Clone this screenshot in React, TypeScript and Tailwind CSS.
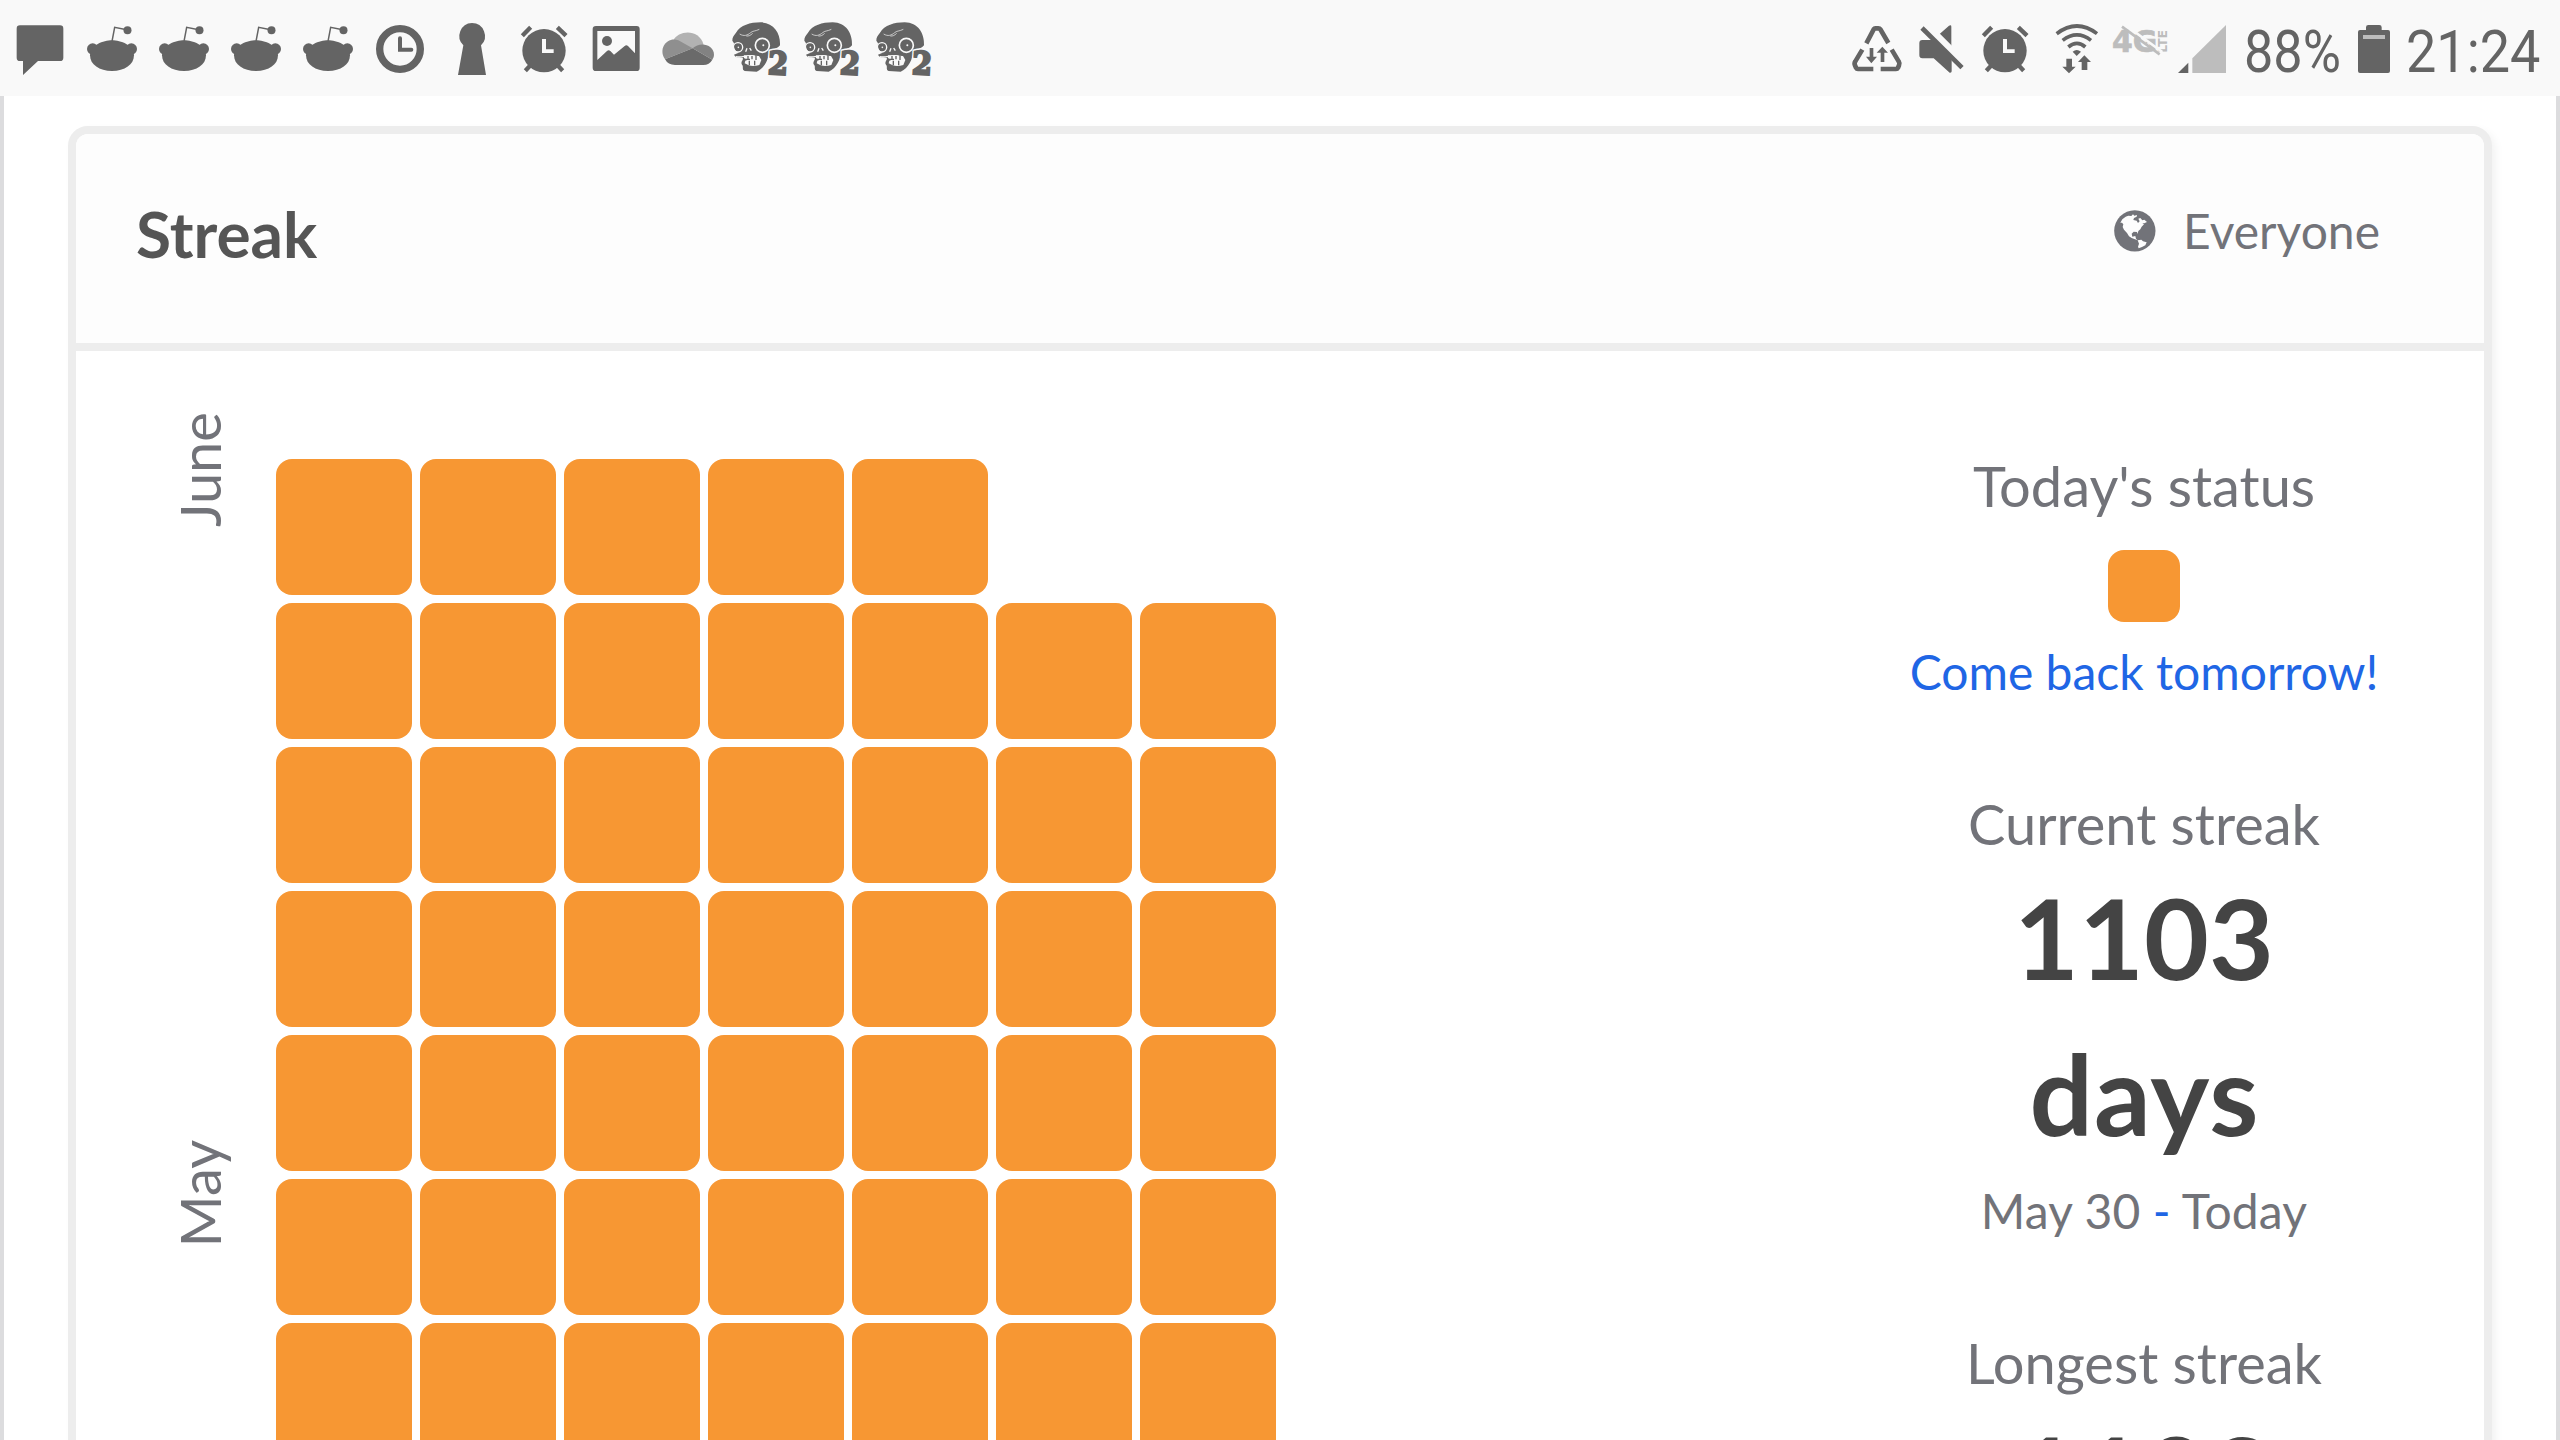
import type { ReactNode } from "react";

const INK = "#646464";
const BAR = "#f9f9f9";

/* Status-bar glyphs are drawn on a grid of three units per pixel. */
function Slot({ x, children }: { x: number; children: ReactNode }) {
  return (
    <svg className="h-24 w-[72px] shrink-0" viewBox={`${x} 0 216 288`} fill={INK}>
      {children}
    </svg>
  );
}

function Message() {
  return (
    <Slot x={12}>
      <path d="M60 76H180Q190 76 190 86V173Q190 183 180 183H114L69 225V183H60Q50 183 50 173V86Q50 76 60 76Z" />
    </Slot>
  );
}

function Reddit() {
  return (
    <Slot x={228}>
      <path d="M336 124L344 82L380 89" fill="none" stroke={INK} strokeWidth="4.5" />
      <circle cx="382.500" cy="91" r="12" />
      <circle cx="278" cy="147" r="17" />
      <circle cx="394" cy="147" r="17" />
      <path d="M336 121C362 121 402 136 402 166C402 194 374 213 336 213C298 213 270 194 270 166C270 136 310 121 336 121Z" />
    </Slot>
  );
}

function Clock() {
  return (
    <Slot x={1092}>
      <circle cx="1200" cy="147" r="61" fill="none" stroke={INK} strokeWidth="22" />
      <path
        d="M1200 115V149.500H1234"
        fill="none"
        stroke={INK}
        strokeWidth="12"
        strokeLinecap="round"
      />
    </Slot>
  );
}

function Keyhole() {
  return (
    <Slot x={-12}>
      <path d="M96 69A39 39 0 0 1 123 136L138 225H54L70 136A39 39 0 0 1 96 69Z" />
    </Slot>
  );
}

function AlarmShape() {
  return (
    <>
      <circle cx="312" cy="152" r="65" />
      <path d="M247 107L272 82M378 107L352 82" stroke={INK} strokeWidth="13" fill="none" />
      <path d="M256 212L280 187M368 212L344 187" stroke={INK} strokeWidth="13" fill="none" />
      <path d="M306 117H318V148H341V159H306Z" fill={BAR} />
    </>
  );
}

function Picture() {
  return (
    <Slot x={420}>
      <path
        fillRule="evenodd"
        d="M468 78H590Q599 78 599 87V203Q599 213 590 213H468Q458 213 458 203V87Q458 78 468 78ZM472 93V180L501 153Q506 149 511 153L522 164L554 138Q559 134 564 138L585 160V93Z"
      />
      <circle cx="501" cy="123" r="15" />
    </Slot>
  );
}

function Cloud() {
  return (
    <Slot x={636}>
      <path d="M700 121C715 92 775 84 791 134L758 146Z" fill="#b2b2b2" />
      <path d="M675 178C652 144 684 108 715 121L758 145Z" fill="#8f8f8f" />
      <path d="M758 145C779 124 822 132 822 165Q822 173 817 179Z" fill="#828282" />
      <path d="M758 145L817 179Q808 195 790 195H705Q684 195 675 178Z" fill="#6a6a6a" />
    </Slot>
  );
}

function Two({ stroke, width }: { stroke: string; width: number }) {
  return (
    <text
      x="984"
      y="223"
      textLength="60"
      lengthAdjust="spacingAndGlyphs"
      fontFamily="DejaVu Serif, serif"
      fontWeight="700"
      fontSize="94"
      stroke={stroke}
      strokeWidth={width}
      transform="rotate(3 1014 190)"
    >
      2
    </text>
  );
}

function Zombie() {
  return (
    <Slot x={852}>
      <path d="M877 122C877 112 880 108 888 98C902 76 930 67 962 67C1002 68 1022 100 1020 136C1012 146 994 150 988 160C984 176 976 204 950 215L914 213C904 208 912 200 906 194C900 186 912 178 908 174C900 170 888 176 882 164L896 158C884 154 880 140 882 130Z" />
      <g fill="none" stroke={BAR}>
        <circle cx="967" cy="136" r="21" strokeWidth="5" />
        <circle cx="894" cy="142" r="14" strokeWidth="4" />
        <path
          d="M899 102C912 110 922 106 932 98C938 92 946 94 958 88M919 108C926 109 932 106 938 100"
          strokeWidth="2"
        />
        <path d="M921 145L917 155M929 144L934 152" strokeWidth="4" />
        <path d="M888 170C908 174 918 164 944 168" strokeWidth="4" />
      </g>
      <path
        d="M912 166L957 168L964 180L958 195Q940 200 926 196L914 190L916 182L922 180L912 174Z"
        fill={BAR}
      />
      <path
        d="M924 168V176M936 168V178M948 168V180M916 178H930M928 182V196M944 182V196"
        stroke={INK}
        strokeWidth="4"
      />
      <circle cx="970" cy="136" r="3" fill={BAR} />
      <circle cx="895" cy="142" r="2.500" fill={BAR} />
      <Two stroke={BAR} width={16} />
      <Two stroke={INK} width={7} />
    </Slot>
  );
}

function Recycle() {
  return (
    <svg className="h-24 w-[60px]" viewBox="80 0 180 288" fill={INK}>
      <path
        d="M138 130L160 88Q162 85 165 85H174Q178 85 180 88L204 129M126 149L105 184Q101 190 104 196L107 203Q109 207 113 207H159M214 149L235 184Q239 190 236 196L233 203Q231 207 227 207H181"
        fill="none"
        stroke={INK}
        strokeWidth="14"
      />
      <path d="M148 144H159V170H170L153 190L137 170H148ZM181 186H192V158H203L186 140L169 158H181Z" />
    </svg>
  );
}

function Muted() {
  return (
    <svg className="h-24 w-[68px]" viewBox="260 0 204 288" fill={INK}>
      <path d="M306 120H346L394 166V214Q394 219 388 218L340 175H306Q297 175 297 166V129Q297 120 306 120ZM357 103L386 77Q393 73 393 80V138Z" />
      <path d="M318 69L446 197" stroke={BAR} strokeWidth="12" />
      <path d="M305 84L425 203" stroke={INK} strokeWidth="14" />
    </svg>
  );
}

function StatusAlarm() {
  return (
    <svg className="h-24 w-[72px]" viewBox="222 0 216 288" fill={INK}>
      <AlarmShape />
    </svg>
  );
}

function Wifi() {
  return (
    <svg className="h-24 w-[64px]" viewBox="680 0 192 288" fill={INK}>
      <g fill="none" stroke={INK} strokeWidth="11">
        <path d="M709 101Q770 55 830 101" />
        <path d="M727 121Q770 88 812 121" />
        <path d="M744 141Q770 119 795 141" />
      </g>
      <path d="M757 155Q769 145 782 155L769 168Z" />
      <path d="M738 176H755V200H766L746 220L726 200H738ZM784 210H801V186H812L792 166L773 186H784Z" />
    </svg>
  );
}

function FourG() {
  return (
    <svg className="h-24 w-[66px]" viewBox="872 0 198 288" fill="#bdbdbd">
      <text
        x="875"
        y="156"
        textLength="136"
        lengthAdjust="spacingAndGlyphs"
        fontFamily="DejaVu Sans, sans-serif"
        fontWeight="700"
        fontSize="90"
        stroke="#bdbdbd"
        strokeWidth="2"
      >
        4G
      </text>
      <text
        x="0"
        y="0"
        textLength="68"
        lengthAdjust="spacingAndGlyphs"
        fontFamily="DejaVu Sans, sans-serif"
        fontWeight="700"
        fontSize="36"
        transform="translate(1039 158) rotate(-90)"
      >
        LTE
      </text>
      <path d="M911 72L1026 156" stroke={BAR} strokeWidth="8" />
      <path d="M905 80L1018 163" stroke="#bdbdbd" strokeWidth="8" />
    </svg>
  );
}

function Signal() {
  return (
    <svg className="h-24 w-[54px]" viewBox="1070 0 162 288">
      <path d="M1073 219L1104 188V219Z" fill={INK} />
      <path d="M1116 219V175L1217 75V219Z" fill="#bdbdbd" />
    </svg>
  );
}

function Battery() {
  return (
    <svg className="h-24 w-[32px]" viewBox="534 0 96 288" fill={INK}>
      <path d="M540 90H558V82Q558 75 565 75H598Q605 75 605 82V90H624Q630 90 630 96V213Q630 219 624 219H540Q534 219 534 213V96Q534 90 540 90Z" />
      <rect x="549" y="105" width="66" height="12" fill="#bdbdbd" />
    </svg>
  );
}

function Globe() {
  return (
    <svg className="size-[42px]" viewBox="161 93 126 126">
      <circle cx="223.500" cy="155.500" r="62" fill="#727379" />
      <path
        fill="#fdfdfd"
        d="M180 131L186 121L196 113L204 110L213 111L218 106L222 110L230 108L229 113L221 117L219 123L229 125L233 132L238 127L234 119L240 117L246 124L252 122L260 129L252 133L246 133L251 136L244 143L240 151L234 156L232 165L230 159L220 158L214 164L216 173L225 171L227 179L232 184L224 181L214 177L206 172L200 162L191 152L187 144L189 136L185 131ZM232 184L243 182L248 187L259 190L255 199L245 204L235 208L233 203L236 194Z"
      />
    </svg>
  );
}

function StatusBar() {
  return (
    <header className="flex h-24 shrink-0 items-start justify-between bg-[#f9f9f9] pl-1">
      <div className="flex">
        <Message />
        <Reddit />
        <Reddit />
        <Reddit />
        <Reddit />
        <Clock />
        <Keyhole />
        <Slot x={204}>
          <AlarmShape />
        </Slot>
        <Picture />
        <Cloud />
        <Zombie />
        <Zombie />
        <Zombie />
      </div>
      <div className="flex w-[713px] font-['Roboto',sans-serif] text-[60px] leading-[103px] text-[#646464]">
        <Recycle />
        <Muted />
        <StatusAlarm />
        <Wifi />
        <FourG />
        <Signal />
        <div className="ml-[13px] w-[114px] shrink-0">
          <span className="inline-block origin-left scale-x-[0.87]">88%</span>
        </div>
        <Battery />
        <div className="ml-[16px] w-[136px] shrink-0">
          <span className="inline-block origin-left scale-x-[0.9]">21:24</span>
        </div>
      </div>
    </header>
  );
}

const weeks = [5, 7, 7, 7, 7, 7, 7];

function Calendar() {
  return (
    <div className="flex">
      <div className="flex w-[200px] flex-col items-start pt-[61px] pl-[90px] text-[56px] leading-[68px] text-[#727379]">
        <span className="h-[728px] rotate-180 text-right [writing-mode:vertical-rl]">June</span>
        <span className="rotate-180 [writing-mode:vertical-rl]">May</span>
      </div>
      <div className="flex flex-col gap-2 pt-[108px]">
        {weeks.map((days, week) => (
          <div key={week} className="flex gap-2">
            {Array.from({ length: days }, (_, day) => (
              <div key={day} className="size-[136px] rounded-2xl bg-[#f79733]" />
            ))}
          </div>
        ))}
      </div>
    </div>
  );
}

function BigCount() {
  return (
    <p className="text-[112px] leading-[156px] font-bold text-[#444]">
      1103
      <br />
      <span className="mr-[-1px] tracking-[1px]">days</span>
    </p>
  );
}

function Stats() {
  return (
    <div className="mr-[100px] flex w-[480px] flex-col items-center pt-[99px] text-center text-[48px] leading-[68px] text-[#727379]">
      <h2 className="text-[56px] leading-[72px]">Today's status</h2>
      <div className="mt-[28px] size-[72px] rounded-2xl bg-[#f79733]" />
      <p className="mt-[16px] text-[#1f66e5]">Come back tomorrow!</p>
      <h2 className="mt-[82px] text-[56px] leading-[72px]">Current streak</h2>
      <div className="-mt-px">
        <BigCount />
      </div>
      <p className="mt-[6px] tracking-[0.15px]">
        May 30 <span className="text-[#1f66e5]">-</span> Today
      </p>
      <h2 className="mt-[82px] text-[56px] leading-[72px]">Longest streak</h2>
      <div className="-mt-[2px]">
        <BigCount />
      </div>
    </div>
  );
}

export default function App() {
  return (
    <div className="flex h-[1440px] w-[2560px] flex-col overflow-hidden bg-white font-['Lato',sans-serif]">
      <StatusBar />
      <main className="h-[1344px] overflow-hidden border-x-4 border-[#dcdcde] px-16 pt-[30px]">
        <section className="h-[1500px] rounded-[20px] border-8 border-[#ededed] bg-white shadow-[4px_4px_8px_rgba(0,0,0,0.05)]">
          <div className="flex h-[217px] items-start justify-between rounded-t-xl border-b-8 border-[#ededed] bg-[#fdfdfd] pr-[104px] pl-[60px]">
            <h1 className="pt-[60px] text-[64px] leading-[80px] font-bold text-[#555]">Streak</h1>
            <div className="flex items-center gap-[27px] pt-[61px] text-[48px] leading-[72px] text-[#727379]">
              <Globe />
              <span>Everyone</span>
            </div>
          </div>
          <div className="flex justify-between">
            <Calendar />
            <Stats />
          </div>
        </section>
      </main>
    </div>
  );
}
